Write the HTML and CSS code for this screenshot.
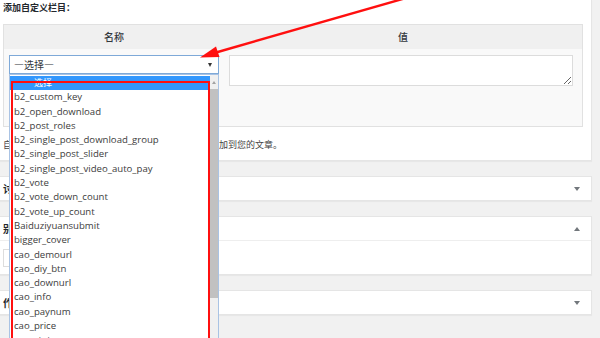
FILE: index.html
```html
<!DOCTYPE html>
<html lang="zh-CN">
<head>
    <meta charset="UTF-8">
    <meta name="viewport" content="width=device-width, initial-scale=1.0">
    <title>自定义栏目</title>
    <link rel="stylesheet" href="styles.css">
</head>
<body>
    <div class="page">
        <div class="postbox fields-box">
            <p class="fields-title">添加自定义栏目：</p>
            <div class="meta-table">
                <div class="meta-head">名称</div>
                <div class="meta-head">值</div>
                <div class="meta-cell key-cell">
                    <div class="select-box">
                        <span>—选择—</span>
                        <span class="caret"></span>
                    </div>
                </div>
                <div class="meta-cell value-cell">
                    <textarea class="meta-value"></textarea>
                </div>
            </div>
            <p class="note">自定义栏目可以用来添加额外的元数据，并将其应用添加到您的文章。</p>
        </div>

        <div class="postbox">
            <div class="box-head">
                <h2>讨论</h2>
                <span class="toggle"></span>
            </div>
        </div>

        <div class="postbox">
            <div class="box-head">
                <h2>别名</h2>
                <span class="toggle open"></span>
            </div>
            <div class="box-body">
                <input type="text" class="slug-input">
            </div>
        </div>

        <div class="postbox">
            <div class="box-head">
                <h2>作者</h2>
                <span class="toggle"></span>
            </div>
        </div>

        <!-- open select list -->
        <div class="dropdown">
            <ul class="options">
                <li class="selected">—选择—</li>
                <li>b2_custom_key</li>
                <li>b2_open_download</li>
                <li>b2_post_roles</li>
                <li>b2_single_post_download_group</li>
                <li>b2_single_post_slider</li>
                <li>b2_single_post_video_auto_pay</li>
                <li>b2_vote</li>
                <li>b2_vote_down_count</li>
                <li>b2_vote_up_count</li>
                <li>Baiduziyuansubmit</li>
                <li>bigger_cover</li>
                <li>cao_demourl</li>
                <li>cao_diy_btn</li>
                <li>cao_downurl</li>
                <li>cao_info</li>
                <li>cao_paynum</li>
                <li>cao_price</li>
                <li>cao_status</li>
            </ul>
            <div class="scrollbar">
                <span class="scroll-up"></span>
                <div class="scroll-thumb"></div>
            </div>
        </div>

        <div class="mark-frame"></div>

        <svg class="mark-arrow" width="600" height="338" viewBox="0 0 600 338">
            <line x1="216" y1="52.5" x2="406" y2="-2" stroke="#ff0f0f" stroke-width="2.4"/>
            <polygon points="200,57.5 219.5,57 216,46.5" fill="#ff0f0f"/>
        </svg>
    </div>
</body>
</html>
```

FILE: styles.css
```css
:root {
    --page-bg: #f1f1f1;
    --card-border: #e5e5e5;
    --text-color: #23282d;
    --list-text: #3c3c3c;
    --pick-blue: #3297fd;
    --mark-red: #ff0f0f;
}

html, body {
    margin: 0;
    padding: 0;
    width: 600px;
    height: 338px;
    overflow: hidden;
}

body {
    font-family: 'Open Sans', 'Noto Sans CJK SC', sans-serif;
    background-color: var(--page-bg);
    color: var(--text-color);
}

.page {
    position: relative;
    width: 600px;
    height: 338px;
    overflow: hidden;
}

.postbox {
    width: 592px;
    box-sizing: border-box;
    background-color: white;
    border: 1px solid var(--card-border);
    border-left: 0;
    box-shadow: 0 1px 1px rgba(0, 0, 0, 0.04);
    margin-bottom: 15px;
}

.fields-box {
    border-top: 0;
    padding: 0 0 7px 3px;
    margin-bottom: 15px;
}

.fields-title {
    margin: 0 0 8px;
    font-family: 'Noto Sans CJK SC', sans-serif;
    font-size: 9px;
    font-weight: 700;
    line-height: 16px;
}

.meta-table {
    display: grid;
    grid-template-columns: 220px 1fr;
    width: 580px;
    box-sizing: border-box;
    border: 1px solid #e1e1e1;
}

.meta-head {
    height: 24px;
    line-height: 24px;
    text-align: center;
    background-color: #f0f0f0;
    font-family: 'Noto Sans CJK SC', sans-serif;
    font-size: 10px;
    font-weight: 500;
    color: #32373c;
}

.meta-cell {
    height: 77px;
    box-sizing: border-box;
    background-color: #f9f9f9;
}

.key-cell {
    padding: 6px 5px;
}

.value-cell {
    padding: 6px 9px 0 5px;
}

.select-box {
    display: flex;
    align-items: center;
    justify-content: space-between;
    width: 210px;
    height: 19px;
    box-sizing: border-box;
    padding: 0 6px 0 4px;
    background-color: white;
    border: 1px solid #7ea9d8;
    font-family: 'Noto Sans CJK SC', sans-serif;
    font-size: 10px;
    color: #32373c;
}

.caret {
    width: 0;
    height: 0;
    border-left: 2.5px solid transparent;
    border-right: 2.5px solid transparent;
    border-top: 4px solid #333;
}

.meta-value {
    display: block;
    width: 344px;
    height: 31px;
    box-sizing: border-box;
    margin: 0;
    border: 1px solid #dcdcdc;
    background-color: white;
    resize: vertical;
}

.note {
    margin: 10px 0 0;
    font-family: 'Noto Sans CJK SC', sans-serif;
    font-size: 9px;
    line-height: 16px;
    color: #444;
}

.box-head {
    display: flex;
    align-items: center;
    justify-content: space-between;
    height: 23px;
    padding: 0 11px 0 3px;
}

.box-head h2 {
    margin: 0;
    font-family: 'Noto Sans CJK SC', sans-serif;
    font-size: 10px;
    font-weight: 700;
}

.toggle {
    width: 0;
    height: 0;
    border-left: 3.5px solid transparent;
    border-right: 3.5px solid transparent;
    border-top: 4px solid #72777c;
}

.toggle.open {
    border-top: 0;
    border-bottom: 4px solid #72777c;
}

.box-body {
    border-top: 1px solid #eee;
    height: 34px;
    box-sizing: border-box;
    padding: 8px 0 0 3px;
}

.slug-input {
    display: block;
    width: 150px;
    height: 18px;
    box-sizing: border-box;
    border: 1px solid #ddd;
    margin: 0;
}

.dropdown {
    position: absolute;
    left: 9px;
    top: 74px;
    width: 210px;
    height: 264px;
    box-sizing: border-box;
    background-color: white;
    border: 1px solid #a9c3e4;
    border-bottom: 0;
    overflow: hidden;
}

.options {
    list-style: none;
    margin: 0;
    padding: 1px 0 0;
    width: 200px;
    font-size: 9.6px;
    line-height: 14.3px;
    color: var(--list-text);
}

.options li {
    padding-left: 4px;
    white-space: nowrap;
}

.options .selected {
    padding-left: 15px;
    background-color: var(--pick-blue);
    color: white;
    font-family: 'Noto Sans CJK SC', sans-serif;
    font-size: 9px;
}

.scrollbar {
    position: absolute;
    top: 0;
    right: 0;
    width: 8px;
    height: 100%;
    background-color: #f0f0f0;
}

.scroll-up {
    position: absolute;
    top: 6px;
    left: 1.5px;
    width: 0;
    height: 0;
    border-left: 2.5px solid transparent;
    border-right: 2.5px solid transparent;
    border-bottom: 3px solid #a3a3a3;
}

.scroll-thumb {
    position: absolute;
    top: 14px;
    left: 0;
    width: 8px;
    height: 209px;
    background-color: #c1c1c1;
}

.mark-frame {
    position: absolute;
    left: 11px;
    top: 81px;
    width: 199px;
    height: 262px;
    box-sizing: border-box;
    border: 2px solid var(--mark-red);
}

.mark-arrow {
    position: absolute;
    left: 0;
    top: 0;
    pointer-events: none;
}
```
